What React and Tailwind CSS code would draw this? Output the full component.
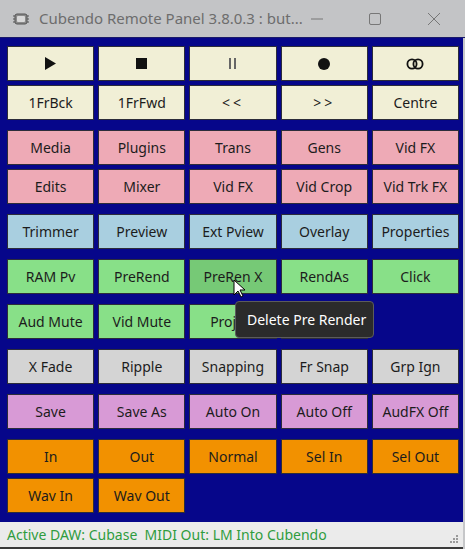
import React from "react";

const CREAM = "bg-[#f1efd6]";
const PINK = "bg-[#eeaab6]";
const BLUE = "bg-[#a9cfe0]";
const GREEN = "bg-[#88e088]";
const GREY = "bg-[#d4d4d4]";
const PURPLE = "bg-[#d89ad6]";
const ORANGE = "bg-[#f29100]";

// each row: colour, top margin, labels
const rows = [
  { color: PINK, gap: "mt-[10px]", items: ["Media", "Plugins", "Trans", "Gens", "Vid FX"] },
  { color: PINK, gap: "mt-1", items: ["Edits", "Mixer", "Vid FX", "Vid Crop", "Vid Trk FX"] },
  { color: BLUE, gap: "mt-[10px]", items: ["Trimmer", "Preview", "Ext Pview", "Overlay", "Properties"] },
  { color: GREEN, gap: "mt-[10px]", items: ["RAM Pv", "PreRend", "PreRen X", "RendAs", "Click"] },
  { color: GREEN, gap: "mt-[10px]", items: ["Aud Mute", "Vid Mute", "Project", ""] },
  { color: GREY, gap: "mt-[10px]", items: ["X Fade", "Ripple", "Snapping", "Fr Snap", "Grp Ign"] },
  { color: PURPLE, gap: "mt-[10px]", items: ["Save", "Save As", "Auto On", "Auto Off", "AudFX Off"] },
  { color: ORANGE, gap: "mt-[10px]", items: ["In", "Out", "Normal", "Sel In", "Sel Out"] },
  { color: ORANGE, gap: "mt-1", items: ["Wav In", "Wav Out"] },
];

function Btn({ color, children, hover }) {
  return (
    <div
      className={`h-[35px] flex items-center justify-center border border-[#2c2c3a] text-[14px] text-[#1c1c1c] ${
        hover ? "bg-[#76c976]" : color
      }`}
    >
      {children}
    </div>
  );
}

function Loop() {
  return (
    <svg width="18" height="12" viewBox="0 0 18 12">
      <circle cx="6" cy="6" r="4.6" fill="none" stroke="#111" strokeWidth="1.8" />
      <circle cx="12" cy="6" r="4.6" fill="none" stroke="#111" strokeWidth="1.8" />
    </svg>
  );
}

export default function App() {
  return (
    <div
      className="w-[465px] h-[549px] flex flex-col bg-[#c6c7c9] relative overflow-hidden"
      style={{ fontFamily: '"Noto Sans", "Open Sans", sans-serif' }}
    >
      {/* Title bar */}
      <div className="h-[38px] flex items-center bg-[#c3c4c6] border-b border-[#1a1a6a]">
        <svg className="ml-[12px]" width="18" height="16" viewBox="0 0 18 16">
          <rect x="3" y="3" width="12" height="10" rx="2" fill="#8a8a8a" stroke="#555" />
          <rect x="5" y="5" width="8" height="6" rx="1" fill="#d8d8d8" />
          <path d="M1 5h2M1 8h2M1 11h2M15 5h2M15 8h2M15 11h2" stroke="#555" strokeWidth="1.2" />
        </svg>
        <span className="ml-[9px] text-[15px] text-[#6d6d6d]">Cubendo Remote Panel 3.8.0.3 : but...</span>
        <div className="ml-auto flex items-center">
          <svg width="58" height="14" viewBox="0 0 58 14">
            <path d="M0 7h12" stroke="#777" strokeWidth="1" />
          </svg>
          <svg width="58" height="14" viewBox="0 0 58 14">
            <rect x="0.5" y="1.5" width="11" height="11" rx="1.5" fill="none" stroke="#777" />
          </svg>
          <svg className="mr-[24px]" width="14" height="14" viewBox="0 0 14 14">
            <path d="M1 1l12 12M13 1L1 13" stroke="#777" strokeWidth="1" />
          </svg>
        </div>
      </div>

      {/* Button panel */}
      <div className="flex-1 bg-[#06068a] pl-[7px] pr-[4px] pt-[8px] mr-[2px]">
        <div className="grid grid-cols-5 gap-x-1">
          <Btn color={CREAM}>
            <svg width="11" height="13" viewBox="0 0 11 13">
              <path d="M0 0L11 6.5L0 13z" fill="#111" />
            </svg>
          </Btn>
          <Btn color={CREAM}>
            <span className="w-[11px] h-[11px] bg-[#111]" />
          </Btn>
          <Btn color={CREAM}>
            <span className="flex gap-[3px]">
              <span className="w-[2px] h-[11px] bg-[#666]" />
              <span className="w-[2px] h-[11px] bg-[#666]" />
            </span>
          </Btn>
          <Btn color={CREAM}>
            <span className="w-[12px] h-[12px] rounded-full bg-[#111]" />
          </Btn>
          <Btn color={CREAM}>
            <Loop />
          </Btn>
        </div>
        <div className="grid grid-cols-5 gap-x-1 mt-1">
          {["1FrBck", "1FrFwd", "<<", ">>", "Centre"].map((t) => (
            <Btn key={t} color={CREAM}>
              {t === "<<" || t === ">>" ? <span className="tracking-[3px]">{t}</span> : t}
            </Btn>
          ))}
        </div>
        {rows.map((r, i) => (
          <div key={i} className={`grid grid-cols-5 gap-x-1 ${r.gap}`}>
            {r.items.map((t, j) => (
              <Btn key={j} color={r.color} hover={t === "PreRen X"}>
                {t}
              </Btn>
            ))}
          </div>
        ))}
      </div>

      {/* Status bar */}
      <div className="h-[27px] flex items-center bg-[#ebebeb] pl-[7px] mr-[2px] border-b-2 border-[#3a3a3a]">
        <span className="text-[14px] text-[#2f9c3e] whitespace-pre">Active DAW: Cubase  MIDI Out: LM Into Cubendo</span>
        <svg className="ml-auto mr-[4px] mt-[8px]" width="10" height="10" viewBox="0 0 10 10">
          {[
            [8, 2],
            [8, 5],
            [5, 5],
            [8, 8],
            [5, 8],
            [2, 8],
          ].map(([x, y], k) => (
            <rect key={k} x={x - 1} y={y - 1} width="2" height="2" fill="#9a9a9a" />
          ))}
        </svg>
      </div>

      {/* Tooltip */}
      <div className="absolute left-[235px] top-[301px] w-[139px] h-[37px] flex items-center pl-[11px] bg-[#2b2b2b] border border-[#5c5c5c] rounded-[4px] text-[14px] text-white">
        Delete Pre Render
      </div>

      {/* Mouse cursor */}
      <svg className="absolute left-[233px] top-[279px]" width="13" height="20" viewBox="0 0 13 20">
        <path d="M1 1v15l4-4 3 6 2-1-3-6h5z" fill="#fff" stroke="#000" strokeWidth="1" strokeLinejoin="round" />
      </svg>
    </div>
  );
}
